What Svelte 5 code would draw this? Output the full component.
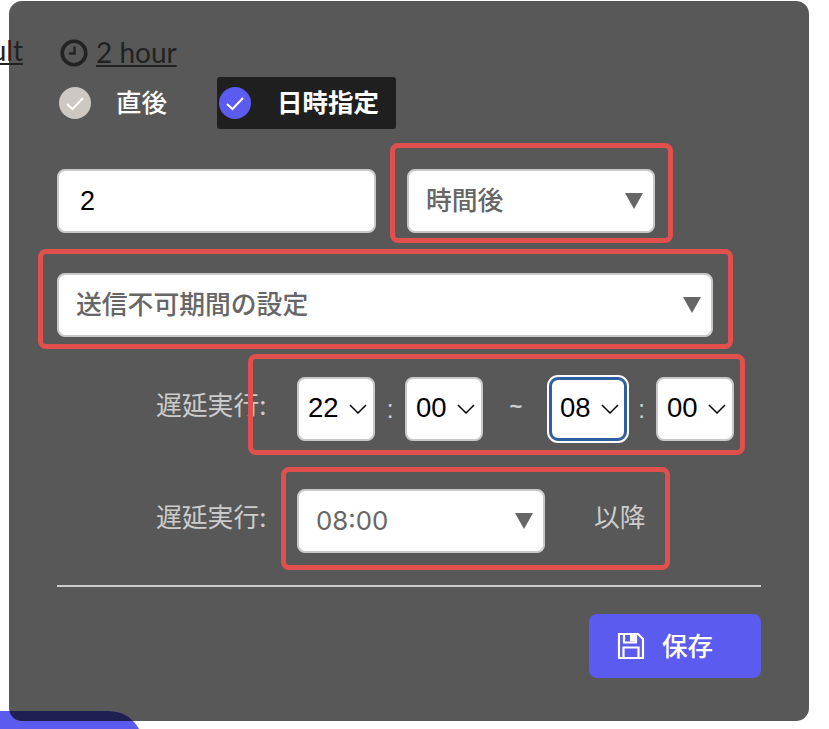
<script lang="ts">
  // time pickers in the "delay" row
  const range = [
    { value: '22', focused: false },
    { value: '00', focused: false },
    { value: '08', focused: true },
    { value: '00', focused: false }
  ];
</script>

{#snippet chevron()}
  <svg class="chevron" viewBox="0 0 18 10" aria-hidden="true">
    <path d="M1 1l8 8 8-8" fill="none" stroke="currentColor" stroke-width="1.5" />
  </svg>
{/snippet}

{#snippet check()}
  <svg viewBox="0 0 32 32" aria-hidden="true">
    <path d="M8 17l5.5 5L24 11" fill="none" stroke="currentColor" stroke-width="2" />
  </svg>
{/snippet}

{#snippet timeSelect(item)}
  <div class="time-select" class:time-select--focus={item.focused}>
    <span>{item.value}</span>
    {@render chevron()}
  </div>
{/snippet}

<div class="page">
  <div class="fab"></div>

  <section class="dialog">
    <div class="info-row">
      <a class="info-link info-link--cut" href="#default">default</a>
      <svg class="clock" viewBox="0 0 28 28" aria-hidden="true">
        <circle cx="14" cy="14" r="11.8" fill="none" stroke="currentColor" stroke-width="3.6" />
        <path d="M14.5 7.5v7H9" fill="none" stroke="currentColor" stroke-width="2.4" />
      </svg>
      <a class="info-link" href="#hour">2 hour</a>
    </div>

    <div class="mode-row">
      <div class="mode">
        <span class="mode__dot">{@render check()}</span>
        <span class="mode__label">直後</span>
      </div>
      <div class="mode mode--active">
        <span class="mode__dot">{@render check()}</span>
        <span class="mode__label">日時指定</span>
      </div>
    </div>

    <div class="row row--amount">
      <input class="field field--amount" value="2" />
      <div class="field field--unit">
        <span>時間後</span>
        <i class="caret"></i>
      </div>
    </div>

    <div class="row">
      <div class="field field--wide">
        <span>送信不可期間の設定</span>
        <i class="caret"></i>
      </div>
    </div>

    <div class="row row--time">
      <span class="label">遅延実行:</span>
      {@render timeSelect(range[0])}
      <span class="colon">:</span>
      {@render timeSelect(range[1])}
      <span class="tilde">~</span>
      {@render timeSelect(range[2])}
      <span class="colon colon--tight">:</span>
      {@render timeSelect(range[3])}
    </div>

    <div class="row row--after">
      <span class="label">遅延実行:</span>
      <div class="field field--unit">
        <span>08:00</span>
        <i class="caret"></i>
      </div>
      <span class="suffix">以降</span>
    </div>

    <hr class="rule" />

    <div class="actions">
      <button class="save" type="button">
        <svg viewBox="0 0 28 28" aria-hidden="true">
          <path d="M2 2h19l5 5v19H2z" fill="none" stroke="currentColor" stroke-width="2.2" stroke-linejoin="round" />
          <path d="M7 2.5v8h12v-8M6.5 25.5V15.5h15v10" fill="none" stroke="currentColor" stroke-width="2.2" />
          <path d="M13 3h5v6.5h-5z" fill="currentColor" />
        </svg>
        <span>保存</span>
      </button>
    </div>

    <!-- red review annotations drawn over the form -->
    <div class="mark mark--unit"></div>
    <div class="mark mark--wide"></div>
    <div class="mark mark--time"></div>
    <div class="mark mark--after"></div>
  </section>
</div>

<style>
  :global(body) {
    margin: 0;
    background: #fff;
    overflow: hidden;
  }
  .page {
    position: relative;
    width: 829px;
    height: 729px;
    overflow: hidden;
    padding: 1px 0 0 9px;
    box-sizing: border-box;
    font-family: "Noto Sans CJK JP", "Liberation Sans", sans-serif;
  }
  .fab {
    position: absolute;
    left: -40px;
    top: 711px;
    width: 183px;
    height: 60px;
    background: #5b5bf0;
    border-radius: 0 34px 0 0;
  }
  .dialog {
    position: relative;
    width: 800px;
    height: 720px;
    box-sizing: border-box;
    padding: 38px 48px 0;
    background: rgba(0, 0, 0, 0.655);
    border-radius: 13px;
  }

  .info-row {
    display: flex;
    align-items: center;
    height: 28px;
    margin-left: -57px;
    color: #222;
  }
  .info-link {
    color: #222;
    font-family: Lato, sans-serif;
    font-size: 28px;
    line-height: 30px;
    margin-bottom: 3px;
    text-decoration: underline;
    text-decoration-thickness: 1.5px;
    text-underline-offset: 2px;
    white-space: nowrap;
  }
  .info-link--cut {
    display: flex;
    justify-content: flex-end;
    width: 23px;
    overflow: hidden;
    padding-bottom: 4px;
  }
  .clock {
    width: 28px;
    height: 28px;
    margin: 0 8px 0 37px;
  }

  .mode-row {
    display: flex;
    margin-top: 10px;
    height: 52px;
  }
  .mode {
    display: flex;
    align-items: center;
    height: 52px;
    margin-left: 2px;
    color: #fff;
    font-size: 25.5px;
    font-weight: 500;
  }
  .mode__label {
    margin-bottom: 5px;
  }
  .mode__dot {
    display: flex;
    width: 32px;
    height: 32px;
    border-radius: 50%;
    background: #cdc8c1;
    color: #fff;
    margin-right: 25px;
  }
  .mode--active {
    margin-left: 50px;
    padding: 0 17px 0 2px;
    background: #1f1f1f;
    border-radius: 3px;
    font-weight: 700;
  }
  .mode--active .mode__dot {
    background: #5b5bf0;
    margin-right: 26px;
  }

  .row {
    display: flex;
    align-items: center;
    height: 64px;
    margin-top: 40px;
  }
  .row--amount {
    gap: 31px;
  }
  .row--after {
    margin-top: 48px;
  }
  .field {
    display: flex;
    align-items: center;
    justify-content: space-between;
    box-sizing: border-box;
    height: 64px;
    padding: 0 10px 0 17px;
    background: #fff;
    border: 2px solid #c9c9c9;
    border-radius: 8px;
    color: #666;
    font-family: inherit;
    font-size: 25.8px;
    font-weight: 500;
  }
  .field > span {
    margin-bottom: 5px;
  }
  .field--amount {
    width: 319px;
    padding-left: 21px;
    color: #000;
    font-family: "Liberation Sans", sans-serif;
    font-size: 27px;
    font-weight: 400;
    outline: none;
  }
  .field--unit {
    width: 248px;
  }
  .field--wide {
    width: 656px;
  }
  .row--after .field span {
    font-family: Inter, "Liberation Sans", sans-serif;
    font-weight: 400;
    margin-bottom: 2px;
  }
  .caret {
    width: 0;
    height: 0;
    border-left: 9px solid transparent;
    border-right: 9px solid transparent;
    border-top: 16px solid #666;
  }

  .label {
    width: 240px;
    box-sizing: border-box;
    padding-left: 99px;
    margin-bottom: 12px;
    color: #ccc;
    font-size: 25.8px;
    white-space: nowrap;
  }
  .time-select {
    display: flex;
    flex: none;
    align-items: center;
    justify-content: space-between;
    box-sizing: border-box;
    width: 78px;
    height: 64px;
    padding: 0 6px 0 9px;
    background: #fff;
    border: 2px solid #c9c9c9;
    border-radius: 8px;
    color: #000;
    font-family: "Liberation Sans", sans-serif;
    font-size: 27.5px;
  }
  .time-select span {
    margin-bottom: 2px;
  }
  .time-select--focus {
    border: 3px solid #2f5f9e;
    border-radius: 9px;
    outline: 2px solid #fff;
    padding: 0 5px 0 8px;
  }
  .chevron {
    width: 18px;
    height: 10px;
  }
  .colon {
    width: 30px;
    text-align: center;
    color: #ccc;
    font-family: "Liberation Sans", sans-serif;
    font-size: 26px;
  }
  .colon--tight {
    width: 29px;
  }
  .tilde {
    width: 66px;
    margin-bottom: 4px;
    text-align: center;
    color: #ccc;
    font-family: "Liberation Sans", sans-serif;
    font-size: 22px;
    font-weight: 700;
  }
  .suffix {
    margin: 0 0 12px 49px;
    color: #ccc;
    font-size: 25.8px;
  }

  .rule {
    height: 2px;
    margin: 32px 0 0;
    border: 0;
    background: #ccc;
  }
  .actions {
    display: flex;
    justify-content: flex-end;
    margin-top: 27px;
  }
  .save {
    display: flex;
    align-items: center;
    gap: 17px;
    box-sizing: border-box;
    width: 172px;
    height: 64px;
    padding: 0 0 0 28px;
    border: 0;
    border-radius: 8px;
    background: #5b5bf0;
    color: #fff;
    font-family: inherit;
    font-size: 25.6px;
    font-weight: 500;
  }
  .save span {
    margin-bottom: 4px;
  }
  .save svg {
    width: 28px;
    height: 28px;
  }

  .mark {
    position: absolute;
    box-sizing: border-box;
    border: 5px solid #e2504e;
    border-radius: 8px;
    pointer-events: none;
  }
  .mark--unit {
    left: 381px;
    top: 142px;
    width: 283px;
    height: 100px;
  }
  .mark--wide {
    left: 29px;
    top: 248px;
    width: 695px;
    height: 100px;
  }
  .mark--time {
    left: 239px;
    top: 353px;
    width: 497px;
    height: 101px;
  }
  .mark--after {
    left: 272px;
    top: 466px;
    width: 389px;
    height: 103px;
  }
</style>
